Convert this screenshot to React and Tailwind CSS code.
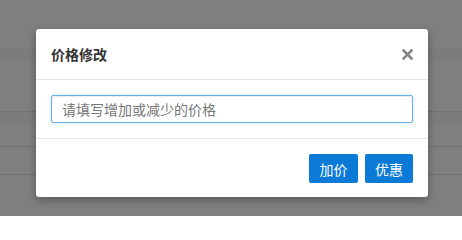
export default function App() {
  const font = { fontFamily: '"Noto Sans CJK SC", "Microsoft YaHei", sans-serif' };
  return (
    <div className="relative w-[462px] h-[216px] overflow-hidden bg-[#7f7f7f]" style={font}>
      <div className="flex flex-col">
        <div className="h-[48px]" />
        <div className="h-[14px] bg-[#7b7c7e]" />
        <div className="h-[49px]" />
        <div className="h-[1px] bg-[#717171]" />
        <div className="h-[14px] bg-[#7c7c7c]" />
        <div className="h-[20px]" />
        <div className="h-[1px] bg-[#717171]" />
        <div className="h-[27px]" />
        <div className="h-[1px] bg-[#717171]" />
      </div>
      <div className="absolute left-[36px] top-[29px] w-[392px] h-[168px] bg-white rounded-[3px] shadow-[0_3px_9px_rgba(0,0,0,0.3)] flex flex-col">
        <div className="h-[51px] px-[15px] flex items-center justify-between border-b border-[#e5e5e5]">
          <span className="text-[14px] leading-[20px] font-bold text-[#333]">价格修改</span>
          <svg width="11" height="11" viewBox="0 0 11 11" className="mt-[1px]">
            <path d="M1.5 1.5 L9.5 9.5 M9.5 1.5 L1.5 9.5" stroke="#858585" strokeWidth="2.6" strokeLinecap="square" />
          </svg>
        </div>
        <div className="p-[15px] border-b border-[#e5e5e5]">
          <input
            className="w-full h-[28px] px-[10px] text-[14px] leading-[20px] text-[#555] border border-[#66afe9] rounded-[2px] outline-none placeholder:text-[#777] shadow-[inset_0_1px_1px_rgba(0,0,0,0.075),0_0_4px_rgba(102,175,233,0.35)]"
            placeholder="请填写增加或减少的价格"
            style={font}
          />
        </div>
        <div className="flex-1 px-[15px] pt-[15px] flex justify-end gap-[7px]">
          <button className="w-[49px] h-[29px] bg-[#0a7ad6] text-white text-[14px] leading-[20px] rounded-[2px]" style={font}>加价</button>
          <button className="w-[48px] h-[29px] bg-[#0a7ad6] text-white text-[14px] leading-[20px] rounded-[2px]" style={font}>优惠</button>
        </div>
      </div>
    </div>
  );
}
